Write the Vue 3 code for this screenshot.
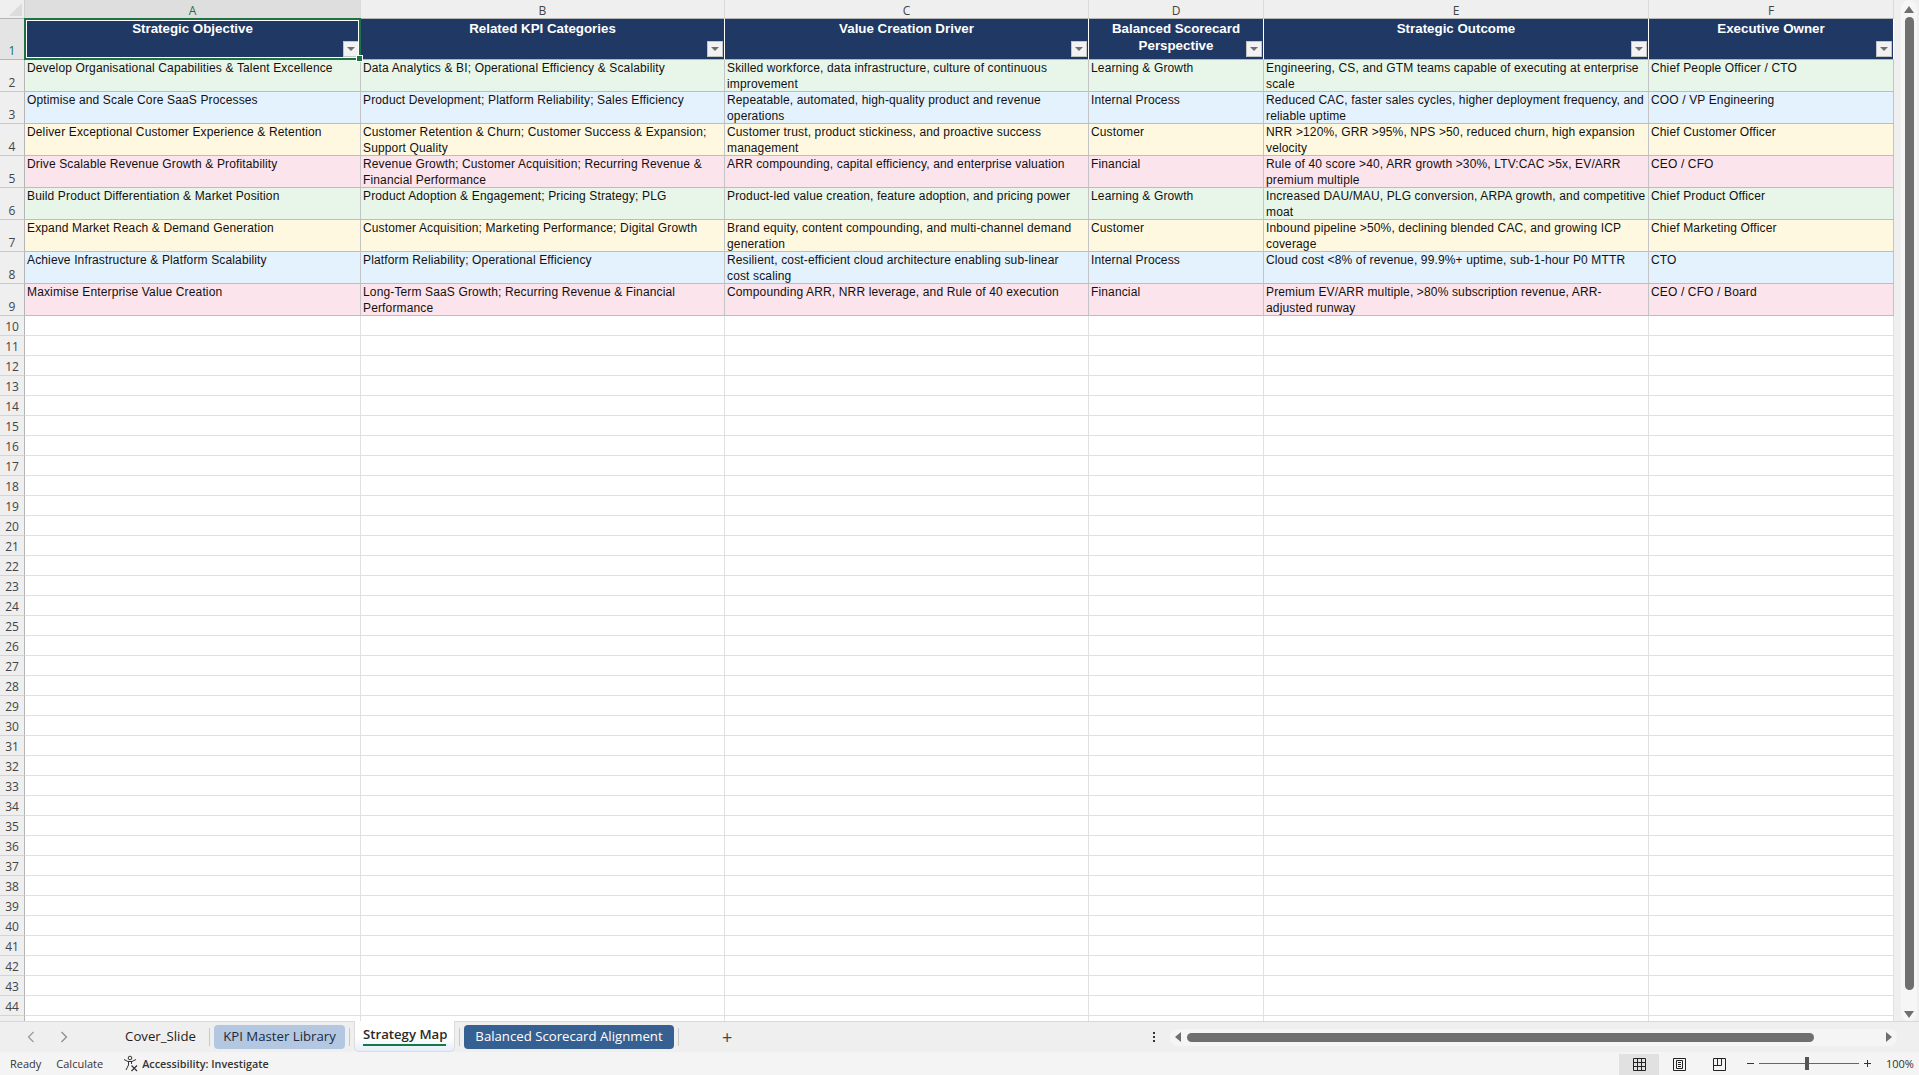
<template>
  <div class="app">
    <div class="main">
      <div class="sheet">
        <div class="corner"><span class="corner-tri"></span></div>
        <div v-for="(c, i) in letters" :key="c" class="col-head" :class="{ active: i === 0 }">{{ c }}</div>

        <div class="row-head first active">1</div>
        <div v-for="(h, i) in headers" :key="h" class="th">
          <span>{{ h }}</span>
          <button class="filter"><i></i></button>
          <template v-if="i === 0">
            <div class="selection"></div>
            <div class="handle"></div>
          </template>
        </div>

        <template v-for="(r, i) in rows" :key="i">
          <div class="row-head data">{{ i + 2 }}</div>
          <div v-for="(cell, j) in r.cells" :key="j" class="td" :class="r.tone">{{ cell }}</div>
        </template>

        <template v-for="n in blankRows" :key="n">
          <!-- row 45 only peeks out above the tab bar, its number is hidden there -->
          <div class="row-head blank">{{ n < 45 ? n : '' }}</div>
          <div v-for="c in letters" :key="c" class="empty"></div>
        </template>
      </div>

      <div class="vscroll">
        <div class="vcapsule">
          <span class="up"></span>
          <div class="vtrack"><div class="vthumb"></div></div>
          <span class="down"></span>
        </div>
      </div>
    </div>

    <div class="tabbar">
      <div class="nav">
        <svg width="10" height="14" viewBox="0 0 10 14"><path d="M7.5 2 L2.5 7 L7.5 12" fill="none" stroke="#9a9a9a" stroke-width="1.2" /></svg>
        <svg width="10" height="14" viewBox="0 0 10 14"><path d="M2.5 2 L7.5 7 L2.5 12" fill="none" stroke="#8a8a8a" stroke-width="1.2" /></svg>
      </div>
      <div class="tabs">
        <div class="tab plain">Cover_Slide</div>
        <span class="sep"></span>
        <div class="tab kpi">KPI Master Library</div>
        <span class="sep"></span>
        <div class="tab current"><span>Strategy Map</span></div>
        <span class="sep"></span>
        <div class="tab balanced">Balanced Scorecard Alignment</div>
        <span class="sep"></span>
      </div>
      <div class="add">+</div>
      <div class="spacer"></div>
      <div class="dots"><i></i><i></i><i></i></div>
      <div class="hscroll">
        <span class="left"></span>
        <div class="hthumb"></div>
        <span class="right"></span>
      </div>
    </div>

    <div class="status">
      <span class="st ready">Ready</span>
      <span class="st calc">Calculate</span>
      <svg class="acc" width="17" height="17" viewBox="0 0 17 17" fill="none" stroke="#333" stroke-width="1">
        <circle cx="8" cy="3" r="1.8" />
        <path d="M2 4.5 L6 6.5 H10 L14 4.5 M6.5 6.5 V10 L4 15 M9.5 6.5 V9" />
        <path d="M9.5 10.5 L15 16 M15 10.5 L9.5 16" stroke-width="1.2" />
      </svg>
      <span class="st acc-text">Accessibility: Investigate</span>
      <div class="spacer"></div>
      <div class="view on">
        <svg width="13" height="13" viewBox="0 0 13 13" fill="none" stroke="#222" stroke-width="1"><path d="M.5.5h12v12H.5zM.5 4.5h12M.5 8.5h12M4.5.5v12M8.5.5v12" /></svg>
      </div>
      <div class="view">
        <svg width="13" height="13" viewBox="0 0 13 13" fill="none" stroke="#222" stroke-width="1"><path d="M.5.5h12v12H.5zM3.5 2.5h6v8h-6zM5 4.5h3M5 6.5h3M5 8.5h3" /></svg>
      </div>
      <div class="view">
        <svg width="13" height="13" viewBox="0 0 13 13" fill="none" stroke="#222" stroke-width="1"><path d="M.5.5h12v12H.5zM.5 7.5h8V.5M4.5.5v7" /></svg>
      </div>
      <div class="zoom">
        <span class="minus"></span>
        <div class="slider"><span class="knob"></span></div>
        <span class="plus"></span>
      </div>
      <span class="pct">100%</span>
    </div>
  </div>
</template>

<script setup>
const letters = ['A', 'B', 'C', 'D', 'E', 'F']

const headers = [
  'Strategic Objective',
  'Related KPI Categories',
  'Value Creation Driver',
  'Balanced Scorecard Perspective',
  'Strategic Outcome',
  'Executive Owner',
]

// line breaks are kept as in the sheet, Excel wraps a bit earlier than the browser
const rows = [
  {
    tone: 'green',
    cells: [
      'Develop Organisational Capabilities & Talent Excellence',
      'Data Analytics & BI; Operational Efficiency & Scalability',
      'Skilled workforce, data infrastructure, culture of continuous\nimprovement',
      'Learning & Growth',
      'Engineering, CS, and GTM teams capable of executing at enterprise\nscale',
      'Chief People Officer / CTO',
    ],
  },
  {
    tone: 'blue',
    cells: [
      'Optimise and Scale Core SaaS Processes',
      'Product Development; Platform Reliability; Sales Efficiency',
      'Repeatable, automated, high-quality product and revenue\noperations',
      'Internal Process',
      'Reduced CAC, faster sales cycles, higher deployment frequency, and\nreliable uptime',
      'COO / VP Engineering',
    ],
  },
  {
    tone: 'yellow',
    cells: [
      'Deliver Exceptional Customer Experience & Retention',
      'Customer Retention & Churn; Customer Success & Expansion;\nSupport Quality',
      'Customer trust, product stickiness, and proactive success\nmanagement',
      'Customer',
      'NRR >120%, GRR >95%, NPS >50, reduced churn, high expansion\nvelocity',
      'Chief Customer Officer',
    ],
  },
  {
    tone: 'pink',
    cells: [
      'Drive Scalable Revenue Growth & Profitability',
      'Revenue Growth; Customer Acquisition; Recurring Revenue &\nFinancial Performance',
      'ARR compounding, capital efficiency, and enterprise valuation',
      'Financial',
      'Rule of 40 score >40, ARR growth >30%, LTV:CAC >5x, EV/ARR\npremium multiple',
      'CEO / CFO',
    ],
  },
  {
    tone: 'green',
    cells: [
      'Build Product Differentiation & Market Position',
      'Product Adoption & Engagement; Pricing Strategy; PLG',
      'Product-led value creation, feature adoption, and pricing power',
      'Learning & Growth',
      'Increased DAU/MAU, PLG conversion, ARPA growth, and competitive\nmoat',
      'Chief Product Officer',
    ],
  },
  {
    tone: 'yellow',
    cells: [
      'Expand Market Reach & Demand Generation',
      'Customer Acquisition; Marketing Performance; Digital Growth',
      'Brand equity, content compounding, and multi-channel demand\ngeneration',
      'Customer',
      'Inbound pipeline >50%, declining blended CAC, and growing ICP\ncoverage',
      'Chief Marketing Officer',
    ],
  },
  {
    tone: 'blue',
    cells: [
      'Achieve Infrastructure & Platform Scalability',
      'Platform Reliability; Operational Efficiency',
      'Resilient, cost-efficient cloud architecture enabling sub-linear\ncost scaling',
      'Internal Process',
      'Cloud cost <8% of revenue, 99.9%+ uptime, sub-1-hour P0 MTTR',
      'CTO',
    ],
  },
  {
    tone: 'pink',
    cells: [
      'Maximise Enterprise Value Creation',
      'Long-Term SaaS Growth; Recurring Revenue & Financial\nPerformance',
      'Compounding ARR, NRR leverage, and Rule of 40 execution',
      'Financial',
      'Premium EV/ARR multiple, >80% subscription revenue, ARR-\nadjusted runway',
      'CEO / CFO / Board',
    ],
  },
]

// empty rows 10..45, the last one is cut off by the tab bar
const blankRows = Array.from({ length: 36 }, (_, i) => i + 10)
</script>

<style>
html,
body {
  margin: 0;
  background: #fff;
}
</style>

<style scoped>
.app {
  width: 1919px;
  height: 1075px;
  display: flex;
  flex-direction: column;
  overflow: hidden;
  font-family: "Liberation Sans", Arial, sans-serif;
  color: #000;
}

.main {
  flex: 1;
  min-height: 0;
  display: flex;
}

.sheet {
  width: 1894px;
  height: 1021px;
  flex: none;
  overflow: hidden;
  display: grid;
  grid-template-columns: 25px 336px 364px 364px 175px 385px 245px;
  grid-template-rows: 19px 41px repeat(8, 32px) repeat(36, 20px);
  background: #fff;
}

/* headers */
.corner {
  background: #efefef;
  border-right: 1px solid #cfcfcf;
  border-bottom: 1px solid #b5b5b5;
  position: relative;
}

.corner-tri {
  position: absolute;
  right: 2px;
  bottom: 2px;
  width: 0;
  height: 0;
  border-left: 13px solid transparent;
  border-bottom: 13px solid #dcdcdc;
}

.col-head {
  background: #efefef;
  border-right: 1px solid #dadada;
  border-bottom: 1px solid #b5b5b5;
  font-family: "Open Sans", sans-serif;
  font-size: 12px;
  line-height: 21px;
  text-align: center;
  color: #444;
}

.col-head.active {
  background: #dedede;
  color: #1e7145;
  border-bottom: 1px solid #1e7145;
}

.row-head {
  background: #efefef;
  border-right: 1px solid #b5b5b5;
  border-bottom: 1px solid #d4d4d4;
  font-family: "Open Sans", sans-serif;
  font-size: 12px;
  color: #444;
  text-align: center;
  display: flex;
  justify-content: center;
}

.row-head.first,
.row-head.data {
  align-items: flex-end;
  line-height: 17px;
}

.row-head.data {
  border-bottom-color: #c8c8c8;
}

.row-head.blank {
  align-items: center;
  padding-top: 1px;
  box-sizing: border-box;
}

.row-head.active {
  background: #e4e4e4;
  color: #1e7145;
  border-bottom-color: #b5b5b5;
}

.th {
  position: relative;
  background: #1f3864;
  color: #fff;
  font-size: 13.33px;
  font-weight: bold;
  line-height: 17px;
  text-align: center;
  padding: 0 3px;
  border-right: 1px solid #fff;
  border-bottom: 1px solid #b5b5b5;
  box-sizing: border-box;
}

.th span {
  display: block;
  padding: 0 16px;
  margin-top: 1px;
}

.filter {
  position: absolute;
  right: 1px;
  bottom: 2px;
  width: 16px;
  height: 16px;
  padding: 0;
  border: 1px solid #c4c4c4;
  background: #f2f2f2;
  display: flex;
  align-items: center;
  justify-content: center;
}

.filter i {
  width: 0;
  height: 0;
  border-left: 4px solid transparent;
  border-right: 4px solid transparent;
  border-top: 4px solid #6e6e6e;
}

.selection {
  position: absolute;
  inset: -1px -1px -1px -1px;
  border: 2px solid #1e7145;
  box-shadow: inset 0 0 0 1px #fff;
  pointer-events: none;
}

.handle {
  position: absolute;
  right: -3px;
  bottom: -3px;
  width: 5px;
  height: 5px;
  background: #1e7145;
  border: 1px solid #fff;
  z-index: 2;
}

/* body */
.td {
  font-size: 12px;
  letter-spacing: 0.14px;
  line-height: 16px;
  white-space: pre;
  padding-left: 2px;
  border-right: 1px solid #c4c4c4;
  border-bottom: 1px solid #bdbdbd;
  box-sizing: border-box;
  overflow: hidden;
  color: #111;
}

.green {
  background: #e8f5e9;
}

.blue {
  background: #e3f2fd;
}

.yellow {
  background: #fff8e1;
}

.pink {
  background: #fce4ec;
}

.empty {
  border-right: 1px solid #e0e0e0;
  border-bottom: 1px solid #e0e0e0;
  box-sizing: border-box;
}

/* right scrollbar */
.vscroll {
  flex: 1;
  background: #efefef;
  padding: 0 2px 0 7px;
  display: flex;
}

.vcapsule {
  flex: 1;
  background: #f6f6f6;
  border-radius: 8px;
  display: flex;
  flex-direction: column;
  align-items: center;
  padding: 2px 0;
  box-sizing: border-box;
}

.vcapsule .up,
.vcapsule .down {
  width: 0;
  height: 0;
  border-left: 5px solid transparent;
  border-right: 5px solid transparent;
}

.vcapsule .up {
  border-bottom: 7px solid #6f6f6f;
  margin-top: 4px;
}

.vcapsule .down {
  border-top: 7px solid #6f6f6f;
  margin-bottom: 1px;
}

.vtrack {
  flex: 1;
  width: 9px;
  padding: 4px 0 21px;
  box-sizing: border-box;
  display: flex;
}

.vthumb {
  width: 100%;
  background: #6f6f6f;
  border-radius: 5px;
}

/* tab bar */
.tabbar {
  height: 31px;
  flex: none;
  background: #efefef;
  border-top: 1px solid #d8d8d8;
  box-sizing: border-box;
  display: flex;
  align-items: center;
  font-family: "Open Sans", sans-serif;
  font-size: 13.2px;
  color: #222;
}

.nav {
  display: flex;
  gap: 23px;
  margin-left: 26px;
  width: 90px;
}

.tabs {
  display: flex;
  align-items: center;
  height: 100%;
}

.sep {
  width: 1px;
  height: 18px;
  background: #c8c8c8;
  margin: 0 4px;
}

.tab {
  height: 24px;
  line-height: 23px;
  white-space: nowrap;
  box-sizing: border-box;
}

.tab.plain {
  width: 89px;
  text-align: center;
}

.tab.kpi {
  background: #b4c7e0;
  border-radius: 4px;
  width: 131px;
  text-align: center;
  color: #1b2a3d;
}

.tab.current {
  height: 31px;
  margin-top: -1px;
  width: 101px;
  background: linear-gradient(#ffffff, #ffffff 55%, #e4edf8);
  border: 1px solid #dcdcdc;
  border-top: none;
  border-radius: 0 0 5px 5px;
  padding: 3px 8px 0;
  font-weight: 600;
  color: #2b2b2b;
}

.tab.current span {
  display: block;
  border-bottom: 2px solid #107c41;
  line-height: 20px;
  height: 20px;
}

.tab.balanced {
  background: #376092;
  color: #fff;
  border-radius: 4px;
  width: 210px;
  text-align: center;
}

.add {
  margin-left: 39px;
  font-size: 18px;
  line-height: 24px;
  color: #444;
}

.spacer {
  flex: 1;
}

.dots {
  display: flex;
  flex-direction: column;
  gap: 2px;
  margin-right: 15px;
}

.dots i {
  width: 2px;
  height: 2px;
  background: #333;
}

.hscroll {
  width: 727px;
  height: 17px;
  margin-right: 22px;
  background: #f5f5f5;
  border-radius: 8px;
  display: flex;
  align-items: center;
  box-sizing: border-box;
  padding: 0 5px;
}

.hscroll .left,
.hscroll .right {
  width: 0;
  height: 0;
  border-top: 5px solid transparent;
  border-bottom: 5px solid transparent;
}

.hscroll .left {
  border-right: 6px solid #6f6f6f;
}

.hscroll .right {
  border-left: 6px solid #6f6f6f;
  margin-left: auto;
}

.hthumb {
  width: 627px;
  height: 9px;
  margin-left: 6px;
  background: #6f6f6f;
  border-radius: 5px;
}

/* status bar */
.status {
  height: 23px;
  flex: none;
  background: #f4f4f4;
  display: flex;
  align-items: center;
  font-family: "Open Sans", sans-serif;
  font-size: 11px;
  color: #333;
}

.ready {
  margin-left: 10px;
}

.calc {
  margin-left: 15px;
}

.acc {
  margin-left: 19px;
}

.acc-text {
  margin-left: 3px;
  font-weight: 600;
  font-size: 10.8px;
}

.view {
  width: 40px;
  height: 21px;
  margin-top: 2px;
  display: flex;
  align-items: center;
  justify-content: center;
}

.view.on {
  background: #e1e1e1;
}

.zoom {
  display: flex;
  align-items: center;
  margin-left: 8px;
}

.minus {
  width: 7px;
  height: 1px;
  background: #333;
}

.slider {
  width: 100px;
  height: 1px;
  background: #666;
  margin: 0 5px;
  position: relative;
}

.knob {
  position: absolute;
  left: 46px;
  top: -6px;
  width: 4px;
  height: 13px;
  background: #555;
}

.plus {
  width: 7px;
  height: 7px;
  background:
    linear-gradient(#333, #333) center / 7px 1px no-repeat,
    linear-gradient(#333, #333) center / 1px 7px no-repeat;
}

.pct {
  margin-left: 15px;
  margin-right: 7px;
  width: 26px;
  font-size: 11px;
}
</style>
